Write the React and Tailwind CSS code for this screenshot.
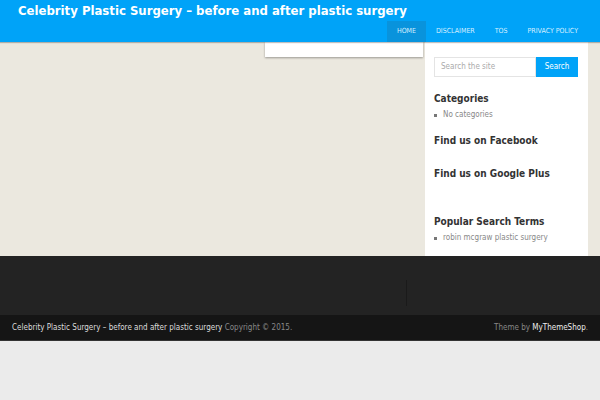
export default function App() {
  const font = { fontFamily: '"DejaVu Sans Condensed", "DejaVu Sans", Verdana, sans-serif', fontStretch: 'condensed' };
  return (
    <div className="w-[600px] h-[400px] bg-[#ebebeb] overflow-hidden" style={font}>
      <header className="h-[42px] bg-[#00a3f8] flex flex-col shadow-[0_1px_1px_rgba(0,0,0,0.25)] relative z-10">
        <div className="pl-[18px] pt-[1px] h-[21px] text-white font-bold text-[13px] leading-[20px] whitespace-nowrap">
          Celebrity Plastic Surgery – before and after plastic surgery
        </div>
        <nav className="flex justify-end pr-[12px] h-[21px] text-[7px] text-[#d8efff] uppercase">
          <span className="px-[10px] bg-[#0993dc] flex items-center">Home</span>
          <span className="px-[10px] flex items-center">Disclaimer</span>
          <span className="px-[10px] flex items-center">Tos</span>
          <span className="px-[10px] flex items-center">Privacy Policy</span>
        </nav>
      </header>
      <main className="h-[214px] bg-[#ebe8df] flex">
        <div className="w-[425px] flex justify-end">
          <div className="w-[158px] h-[15px] bg-white mr-[2px] shadow-[0_1px_2px_rgba(0,0,0,0.35)]"></div>
        </div>
        <aside className="w-[163px] bg-white px-[9px] pt-[15px]">
          <div className="flex h-[20px]">
            <div className="w-[102px] border border-[#e4e4e4] text-[8px] text-[#aaa] flex items-center pl-[6px]">Search the site</div>
            <div className="w-[42px] bg-[#00a3f8] text-white text-[8px] flex items-center justify-center">Search</div>
          </div>
          <h3 className="mt-[15px] text-[10px] font-bold text-[#333] leading-[14px]">Categories</h3>
          <ul className="mt-[3px] text-[8px] text-[#888] leading-[12px]">
            <li className="flex items-center"><span className="w-[3px] h-[3px] bg-[#777] mr-[6px]"></span>No categories</li>
          </ul>
          <h3 className="mt-[13px] text-[10px] font-bold text-[#333] leading-[14px]">Find us on Facebook</h3>
          <h3 className="mt-[19px] text-[10px] font-bold text-[#333] leading-[14px]">Find us on Google Plus</h3>
          <h3 className="mt-[34px] text-[10px] font-bold text-[#333] leading-[14px]">Popular Search Terms</h3>
          <ul className="mt-[3px] text-[8px] text-[#888] leading-[12px]">
            <li className="flex items-center"><span className="w-[3px] h-[3px] bg-[#777] mr-[6px]"></span>robin mcgraw plastic surgery</li>
          </ul>
        </aside>
      </main>
      <div className="h-[59px] bg-[#232323] flex">
        <div className="w-[406px]"></div>
        <div className="mt-[24px] w-[1px] h-[26px] bg-[#1a1a1a]"></div>
      </div>
      <footer className="h-[26px] bg-[#151515] flex items-center justify-between px-[12px] text-[8px] border-b border-[#333]">
        <div><span className="text-[#ddd]">Celebrity Plastic Surgery – before and after plastic surgery</span> <span className="text-[#888]">Copyright © 2015.</span></div>
        <div className="text-[#888]">Theme by <span className="text-[#eee]">MyThemeShop</span>.</div>
      </footer>
    </div>
  );
}
